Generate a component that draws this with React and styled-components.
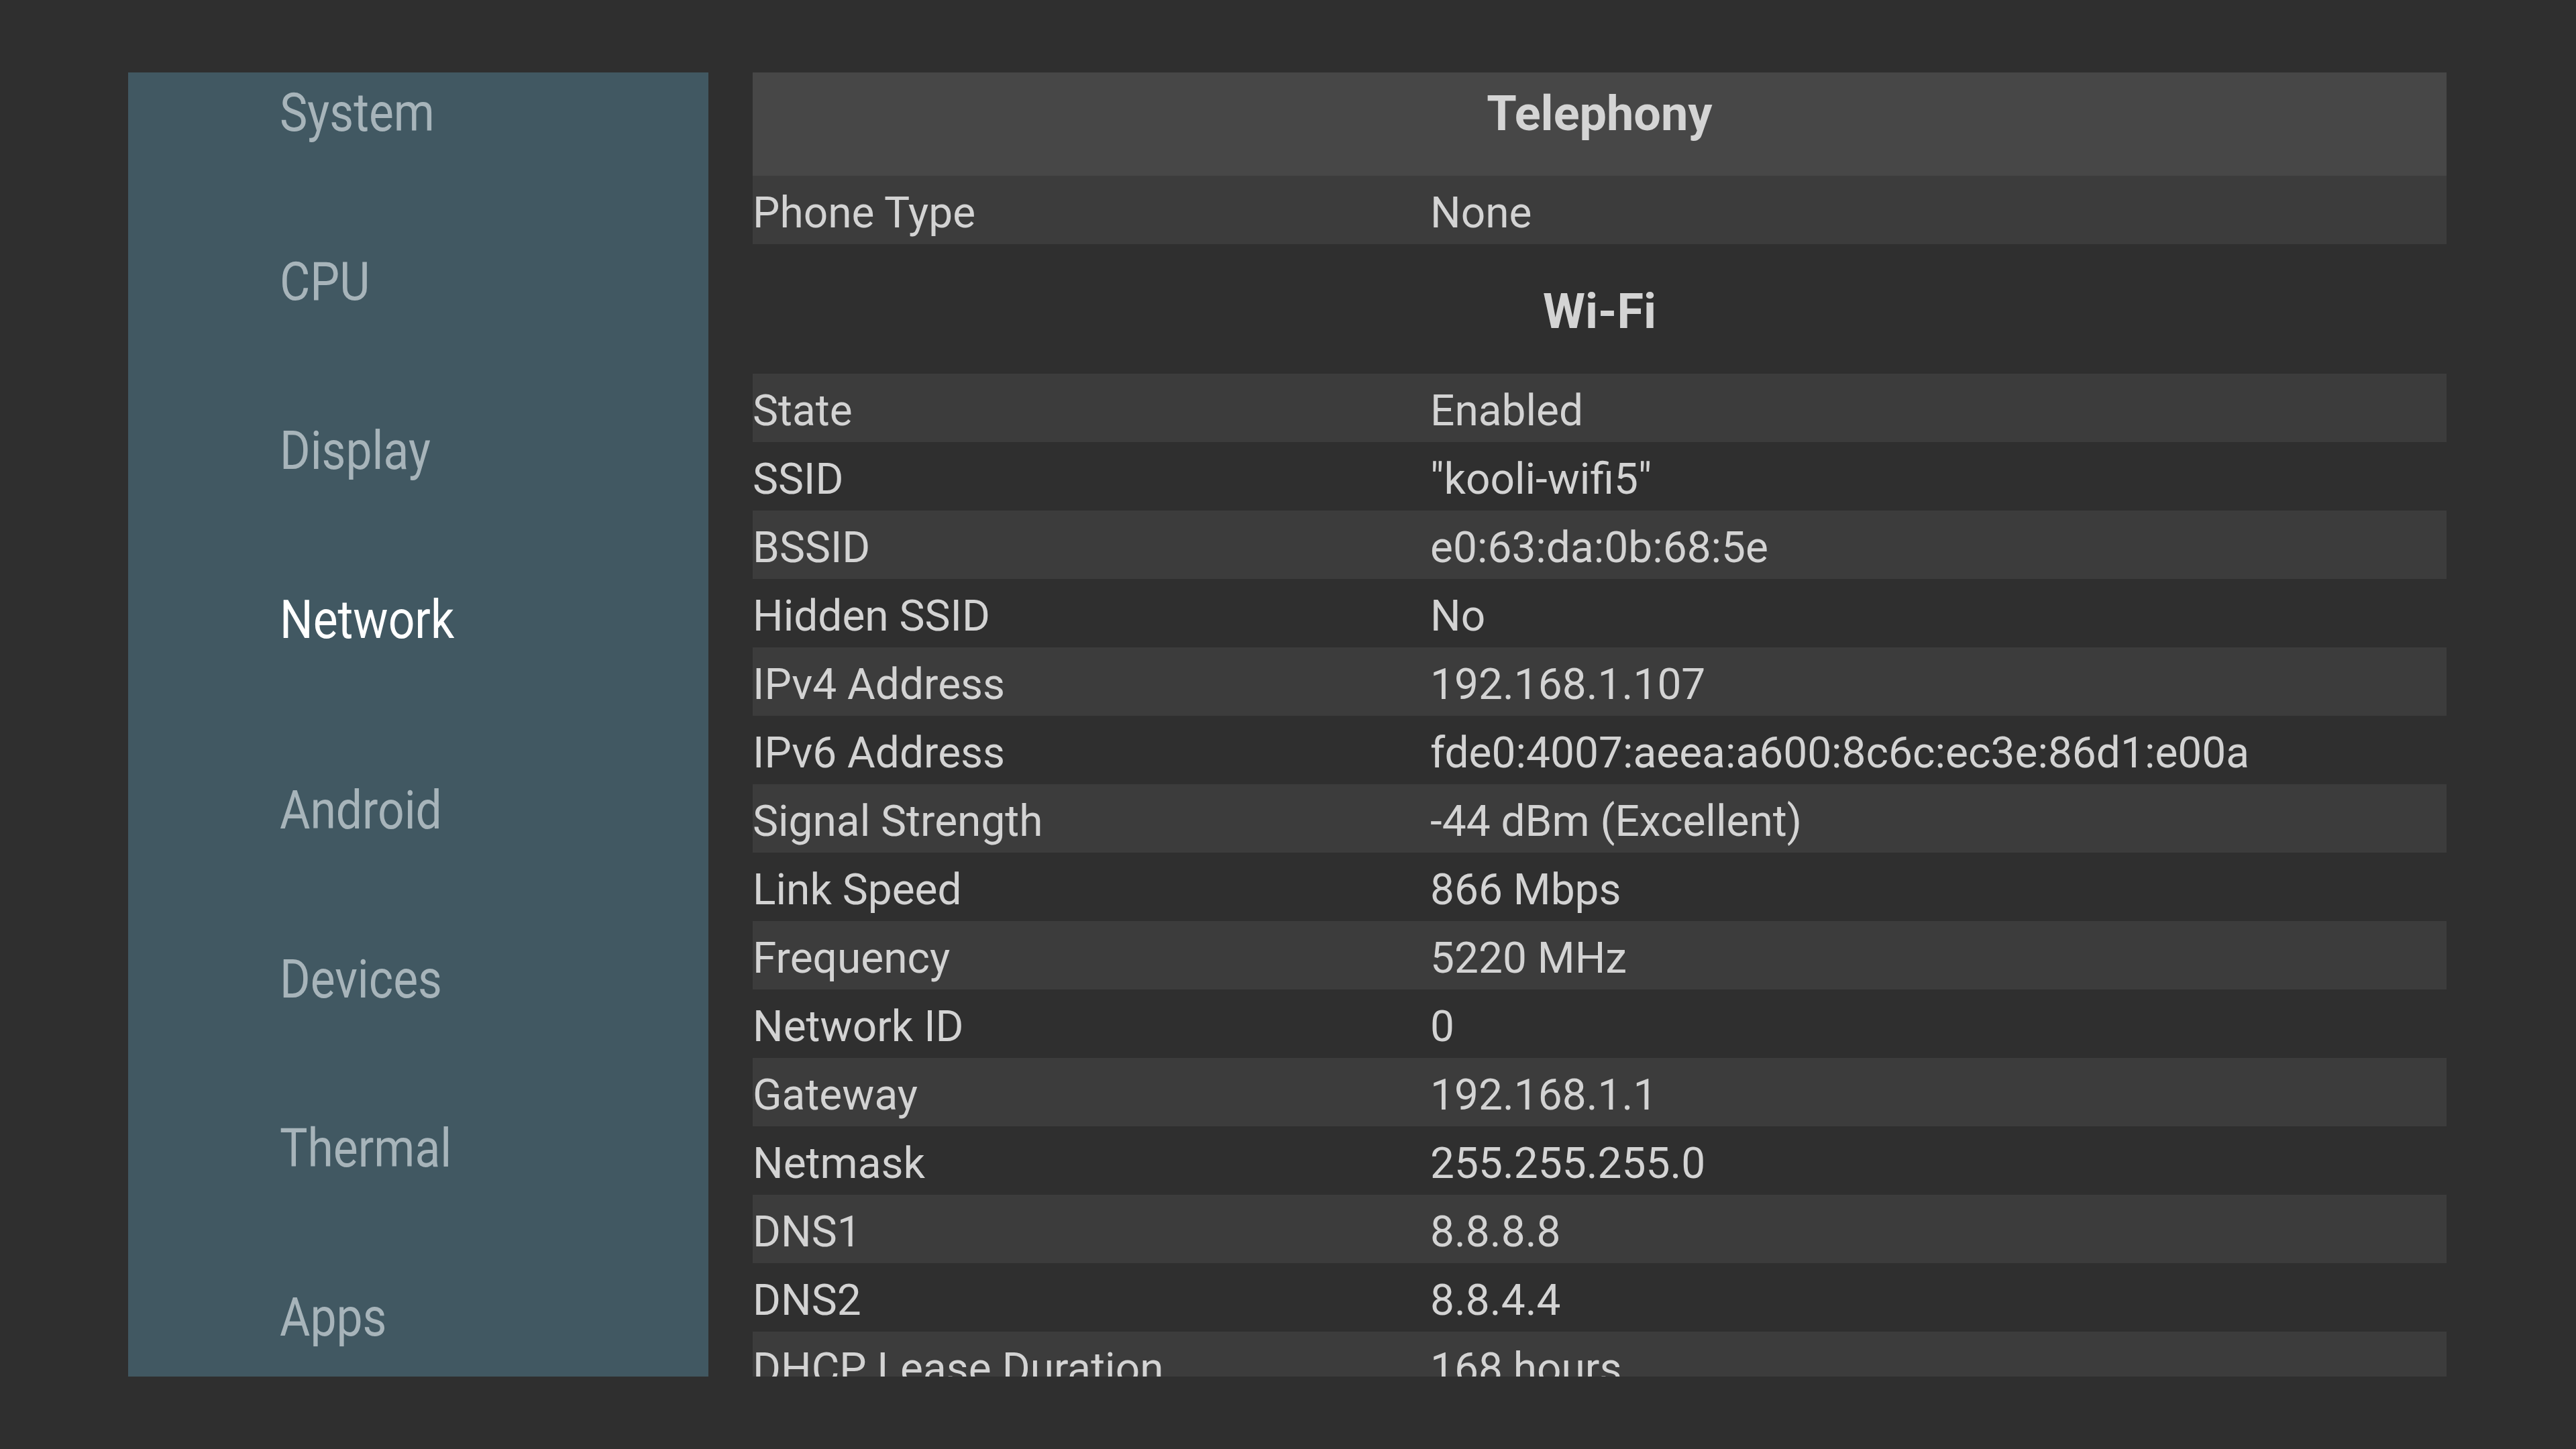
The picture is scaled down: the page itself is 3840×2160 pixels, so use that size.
import React from "react";
import styled, { createGlobalStyle } from "styled-components";

const GlobalStyle = createGlobalStyle`
  html, body {
    margin: 0;
    padding: 0;
    background: #2f2f2f;
  }
  body {
    font-family: Roboto, "Noto Sans", "Liberation Sans", sans-serif;
  }
`;

const Screen = styled.div`
  display: flex;
  gap: 66px;
  box-sizing: border-box;
  width: 3840px;
  height: 2160px;
  padding: 108px 193px 108px 191px;
  background: #2f2f2f;
  overflow: hidden;
`;

const Sidebar = styled.nav`
  flex: 0 0 865px;
  display: flex;
  flex-direction: column;
  box-sizing: border-box;
  padding-top: 13px;
  background: #415862;
  overflow: hidden;
`;

const NavItem = styled.div`
  flex-shrink: 0;
  height: 252px;
  box-sizing: border-box;
  padding-left: 226px;
  margin-bottom: ${(p) => (p.$active ? "32px" : "0")};
  font-size: 80px;
  line-height: 94px;
  font-weight: 400;
  color: ${(p) => (p.$active ? "#ffffff" : "#a7b4ba")};
  white-space: nowrap;
`;

const NavLabel = styled.span`
  display: inline-block;
  transform: scaleX(0.87);
  transform-origin: left center;
`;

const Panel = styled.main`
  flex: 1;
  min-width: 0;
  display: flex;
  flex-direction: column;
  overflow: hidden;
`;

const SectionHeader = styled.div`
  flex-shrink: 0;
  height: 154px;
  box-sizing: border-box;
  margin-top: ${(p) => (p.$first ? "0" : "39px")};
  padding-top: 20px;
  text-align: center;
  font-size: 72px;
  line-height: 84px;
  font-weight: 700;
  color: #d4d4d4;
  background: ${(p) => (p.$filled ? "#474747" : "transparent")};
`;

const Row = styled.div`
  flex-shrink: 0;
  display: grid;
  grid-template-columns: 1010px 1fr;
  height: 102px;
  box-sizing: border-box;
  padding-top: 18px;
  font-size: 64px;
  line-height: 75px;
  color: #d3d3d3;
  white-space: nowrap;
  background: ${(p) => (p.$shaded ? "#3c3c3c" : "transparent")};
`;

const Cell = styled.span`
  overflow: hidden;
`;

const navItems = ["System", "CPU", "Display", "Network", "Android", "Devices", "Thermal", "Apps"];

const sections = [
  {
    title: "Telephony",
    filled: true,
    rows: [["Phone Type", "None"]],
  },
  {
    title: "Wi-Fi",
    filled: false,
    rows: [
      ["State", "Enabled"],
      ["SSID", "\"kooli-wifi5\""],
      ["BSSID", "e0:63:da:0b:68:5e"],
      ["Hidden SSID", "No"],
      ["IPv4 Address", "192.168.1.107"],
      ["IPv6 Address", "fde0:4007:aeea:a600:8c6c:ec3e:86d1:e00a"],
      ["Signal Strength", "-44 dBm (Excellent)"],
      ["Link Speed", "866 Mbps"],
      ["Frequency", "5220 MHz"],
      ["Network ID", "0"],
      ["Gateway", "192.168.1.1"],
      ["Netmask", "255.255.255.0"],
      ["DNS1", "8.8.8.8"],
      ["DNS2", "8.8.4.4"],
      ["DHCP Lease Duration", "168 hours"],
    ],
  },
];

export default function App() {
  return (
    <>
      <GlobalStyle />
      <Screen>
        <Sidebar>
          {navItems.map((name) => (
            <NavItem key={name} $active={name === "Network"}>
              <NavLabel>{name}</NavLabel>
            </NavItem>
          ))}
        </Sidebar>
        <Panel>
          {sections.map((section, si) => (
            <React.Fragment key={section.title}>
              <SectionHeader $first={si === 0} $filled={section.filled}>
                {section.title}
              </SectionHeader>
              {section.rows.map(([label, value], ri) => (
                <Row key={label} $shaded={ri % 2 === 0}>
                  <Cell>{label}</Cell>
                  <Cell>{value}</Cell>
                </Row>
              ))}
            </React.Fragment>
          ))}
        </Panel>
      </Screen>
    </>
  );
}
